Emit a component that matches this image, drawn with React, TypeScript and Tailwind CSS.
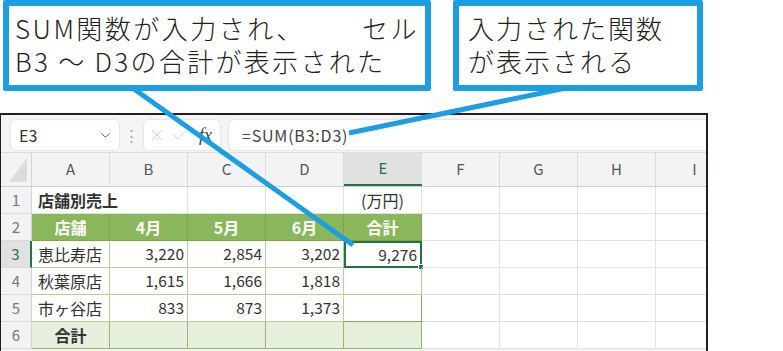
import { ChevronDown, X, Check } from 'lucide-react'

const font = { fontFamily: '"Noto Sans CJK JP", "Noto Sans", sans-serif' }

type CellProps = {
  text?: string
  align?: 'left' | 'right' | 'center'
  className?: string
}

function Cell({ text = '', align = 'left', className = '' }: CellProps) {
  const alignClass =
    align === 'right'
      ? 'justify-end pr-[3px] text-[15.5px]'
      : align === 'center'
        ? 'justify-center text-[16px]'
        : 'justify-start pl-[6px] text-[16px]'
  return (
    <div className={`relative flex items-center w-[78px] shrink-0 h-full whitespace-nowrap ${alignClass} ${className}`}>
      {text}
    </div>
  )
}

function RowHead({ n, active = false }: { n: number; active?: boolean }) {
  return (
    <div
      className={`flex items-center justify-center w-[31px] shrink-0 h-full text-[15px] border-b border-[#dadada] ${
        active ? 'bg-[#e1e1e1] text-[#217346] border-r-2 border-r-[#217346]' : 'bg-[#f3f3f3] text-[#777] border-r border-r-[#d4d4d4]'
      }`}
    >
      {n}
    </div>
  )
}

const grid = 'border-r border-b border-[#e2e2e2]'
const tbl = 'border-r border-b border-[#b5cf9b]'
const emptyCols = ['F', 'G', 'H', 'I']

function Callout({ children, className }: { children: React.ReactNode; className: string }) {
  return (
    <div className={`border-[6px] border-[#1e9ee2] rounded-[2px] bg-white text-[#231f20] text-[26px] leading-[33px] font-light ${className}`}>
      {children}
    </div>
  )
}

export default function App() {
  const rows = [
    { n: 3, name: '恵比寿店', v: ['3,220', '2,854', '3,202'] },
    { n: 4, name: '秋葉原店', v: ['1,615', '1,666', '1,818'] },
    { n: 5, name: '市ヶ谷店', v: ['833', '873', '1,373'] },
  ]

  return (
    <div className="relative w-[783px] h-[351px] overflow-hidden bg-white" style={font}>
      {/* callouts */}
      <div className="flex items-start pl-[3px] gap-[22px]">
        <Callout className="w-[428px] h-[91px] pl-[6px] pt-[5px]">
          <div className="flex justify-between w-[404px] whitespace-nowrap tracking-[2.5px]">
            <span>SUM関数が入力され、</span>
            <span>セル</span>
          </div>
          <div className="whitespace-nowrap tracking-[2.3px]">B3 ～ D3の合計が表示された</div>
        </Callout>
        <Callout className="w-[250px] h-[91px] pl-[9px] pt-[5px] tracking-[2px]">
          <div className="whitespace-nowrap">入力された関数</div>
          <div className="whitespace-nowrap">が表示される</div>
        </Callout>
      </div>

      {/* excel window */}
      <div className="mt-[22px] w-[708px] h-[240px] border-t-2 border-r-2 border-l border-[#231f20] bg-[#f3f3f3] overflow-hidden">
        {/* formula bar */}
        <div className="flex items-start h-[38px] pt-[4px] border-b border-[#dcdcdc] bg-[#f4f4f4]">
          <div className="ml-[9px] flex items-center justify-between w-[110px] h-[32px] rounded-md bg-white border border-[#e6e6e6] pl-[8px] pr-[6px] text-[16px] text-[#333]">
            <span>E3</span>
            <ChevronDown size={15} strokeWidth={1.5} color="#555" />
          </div>
          <div className="flex items-center justify-center w-[23px] h-[32px] text-[#9a9a9a] text-[15px]">⋮</div>
          <div className="flex items-center w-[78px] h-[32px] rounded-md bg-white border border-[#e6e6e6] pl-[4px]">
            <X size={18} strokeWidth={1.1} color="#c4c4c4" />
            <Check size={18} strokeWidth={1.1} color="#c4c4c4" className="ml-[5px]" />
            <span className="ml-[10px] text-[18px] italic text-[#444]" style={{ fontFamily: '"Liberation Serif", serif' }}>
              fx
            </span>
          </div>
          <div className="ml-[7px] flex-1 flex items-center h-[32px] rounded-l-md bg-white border border-r-0 border-[#e6e6e6] pl-[13px] text-[16px] tracking-[0.8px] text-[#444]">
            =SUM(B3:D3)
          </div>
        </div>

        {/* column headers */}
        <div className="flex h-[34px] bg-[#f3f3f3] border-b border-[#cfcfcf]">
          <div className="relative w-[31px] shrink-0 h-full border-r border-[#d4d4d4]">
            <div className="absolute right-[4px] bottom-[4px] w-0 h-0 border-l-[18px] border-l-transparent border-b-[24px] border-b-[#dcdcdc]" />
          </div>
          {['A', 'B', 'C', 'D'].map((c) => (
            <div key={c} className="flex items-center justify-center w-[78px] shrink-0 h-full border-r border-[#dcdcdc] text-[15px] text-[#555]">
              {c}
            </div>
          ))}
          <div className="flex items-center justify-center w-[78px] shrink-0 h-full bg-[#e1e1e1] border-b-2 border-[#217346] text-[15px] text-[#217346]">
            E
          </div>
          {emptyCols.map((c) => (
            <div key={c} className="flex items-center justify-center w-[78px] shrink-0 h-full border-r border-[#dcdcdc] text-[15px] text-[#555]">
              {c}
            </div>
          ))}
        </div>

        {/* sheet */}
        <div className="bg-white text-[#333]">
          <div className="flex h-[27px]">
            <RowHead n={1} />
            <Cell text="店舗別売上" className="font-bold border-b border-[#e2e2e2] z-10" />
            <Cell className={grid} />
            <Cell className={grid} />
            <Cell className={grid} />
            <Cell text="(万円)" align="center" className={grid} />
            {emptyCols.map((c) => (
              <Cell key={c} className={grid} />
            ))}
          </div>
          <div className="flex h-[27px]">
            <RowHead n={2} />
            {['店舗', '4月', '5月', '6月', '合計'].map((t) => (
              <Cell key={t} text={t} align="center" className="bg-[#8ab75c] text-white font-bold border-r border-b border-[#79a84b]" />
            ))}
            {emptyCols.map((c) => (
              <Cell key={c} className={grid} />
            ))}
          </div>
          {rows.map((r) => (
            <div key={r.n} className="flex h-[27px]">
              <RowHead n={r.n} active={r.n === 3} />
              <Cell text={r.name} className={tbl} />
              {r.v.map((v, i) => (
                <Cell key={i} text={v} align="right" className={tbl} />
              ))}
              {r.n === 3 ? (
                <div className="relative flex items-center justify-end w-[78px] shrink-0 h-full pr-[3px] text-[15.5px] border-2 border-[#217346]">
                  9,276
                  <div className="absolute -right-[4px] -bottom-[4px] w-[6px] h-[6px] bg-[#217346] border border-white" />
                </div>
              ) : (
                <Cell className={r.n === 5 ? 'border-r border-b border-[#7fae55]' : tbl} />
              )}
              {emptyCols.map((c) => (
                <Cell key={c} className={grid} />
              ))}
            </div>
          ))}
          <div className="flex h-[27px]">
            <RowHead n={6} />
            <Cell text="合計" align="center" className="bg-[#e6efdc] font-bold border-r border-b border-[#8fbb67]" />
            {[0, 1, 2, 3].map((i) => (
              <Cell key={i} className="bg-[#e6efdc] border-r border-b border-[#8fbb67]" />
            ))}
            {emptyCols.map((c) => (
              <Cell key={c} className={grid} />
            ))}
          </div>
        </div>
      </div>

      {/* pointer lines */}
      <svg className="absolute inset-0 pointer-events-none" width="783" height="351">
        <line x1="134" y1="89" x2="353" y2="245" stroke="#1e9ee2" strokeWidth="5" />
        <line x1="566" y1="88" x2="349" y2="133" stroke="#1e9ee2" strokeWidth="5" />
      </svg>
    </div>
  )
}
